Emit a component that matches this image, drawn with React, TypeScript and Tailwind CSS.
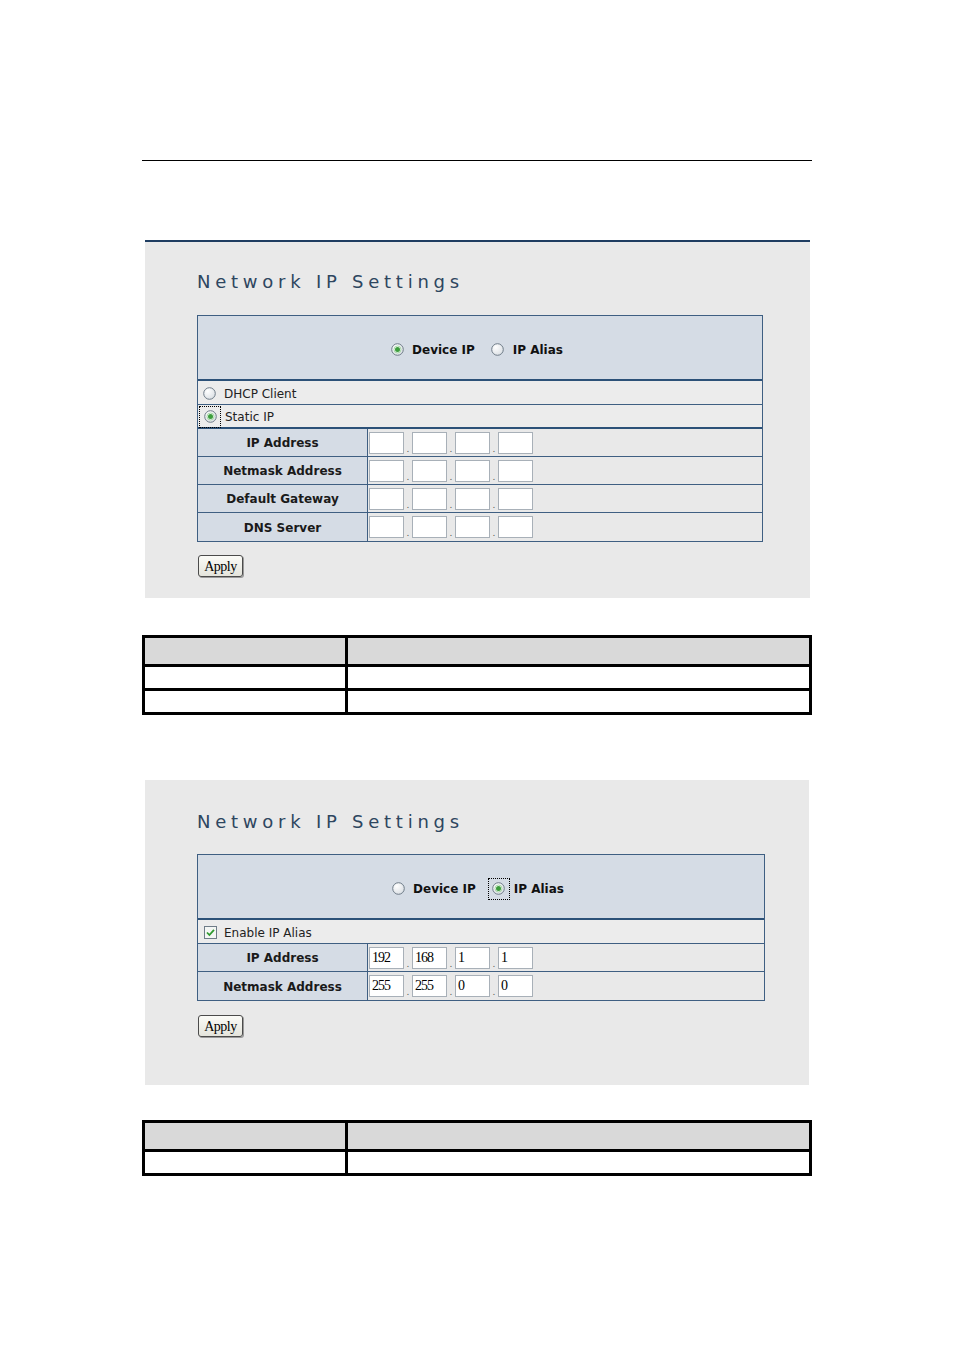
const verdana = "font-['DejaVu_Sans',Verdana,sans-serif]";

function Radio({ checked }: { checked?: boolean }) {
  return (
    <svg width="13" height="13" viewBox="0 0 13 13" className="shrink-0">
      <defs>
        <radialGradient id="rg" cx="0.35" cy="0.3" r="0.8">
          <stop offset="0" stopColor="#ffffff" />
          <stop offset="1" stopColor="#d8dde2" />
        </radialGradient>
      </defs>
      <circle cx="6.5" cy="6.5" r="5.8" fill="url(#rg)" stroke="#6f7c88" strokeWidth="1" />
      {checked && <circle cx="6.5" cy="6.5" r="2.5" fill="#3c9e3c" />}
      {checked && <circle cx="6.5" cy="6.5" r="3.5" fill="none" stroke="#a9dba9" strokeWidth="1" />}
    </svg>
  );
}

function Checkbox() {
  return (
    <svg width="13" height="13" viewBox="0 0 13 13" className="shrink-0">
      <rect x="0.5" y="0.5" width="12" height="12" fill="#f4f6f4" stroke="#6f7c88" />
      <path d="M3 6.5 L5.4 9 L10 3.8" fill="none" stroke="#2f9a2f" strokeWidth="1.8" />
    </svg>
  );
}

function Focus({ children, on }: { children: React.ReactNode; on?: boolean }) {
  return (
    <span
      className={`flex h-[22px] w-[22px] items-center justify-center border border-dotted ${on ? "border-black" : "border-transparent"}`}
    >
      {children}
    </span>
  );
}

function IpInputs({ values }: { values?: string[] }) {
  const v = values ?? ["", "", "", ""];
  return (
    <div className="flex items-center pl-[1px]">
      {v.map((val, i) => (
        <div key={i} className="flex items-end">
          <div className="flex h-[22px] w-[35px] items-center border border-[#a8b0b8] bg-white pl-[2px] font-['Liberation_Serif',serif] text-[14px] leading-none tracking-[-1px] text-black">
            {val}
          </div>
          {i < 3 && <span className="w-[8px] text-center text-[9px] leading-[10px] text-[#555]">.</span>}
        </div>
      ))}
    </div>
  );
}

function IpRow({ label, values }: { label: string; values?: string[] }) {
  return (
    <div className="flex h-[28px] border-b border-[#3f5f82] last:border-b-0">
      <div className="flex w-[170px] items-center justify-center border-r border-[#3f5f82] bg-[#d5dce5] pt-px text-[12px] font-bold text-[#1a1a1a]">
        {label}
      </div>
      <div className="flex flex-1 items-center bg-[#e9e9e9]">
        <IpInputs values={values} />
      </div>
    </div>
  );
}

function Header({ alias }: { alias?: boolean }) {
  return (
    <div className="flex h-[65px] items-center justify-center border-b-2 border-[#2c5178] bg-[#d5dce5] pr-[6px] pt-[4px] text-[12px] font-bold text-[#111]">
      <div className="flex items-center gap-[8px]">
        <Radio checked={!alias} />
        <span>Device IP</span>
      </div>
      <div className="ml-[12px] flex items-center gap-[4px]">
        <Focus on={alias}>
          <Radio checked={alias} />
        </Focus>
        <span>IP Alias</span>
      </div>
    </div>
  );
}

function ApplyButton() {
  return (
    <button className="flex h-[22px] w-[45px] items-center justify-center rounded-[3px] border border-[#4b4b4b] bg-gradient-to-b from-[#fbfbf7] to-[#e4e4dc] font-['Liberation_Serif',serif] text-[14px] tracking-[-0.5px] text-black shadow-[1px_1px_0_#9a9a9a]">
      Apply
    </button>
  );
}

function Title() {
  return (
    <h2 className="text-[18px] leading-[22px] tracking-[4.75px] text-[#2e465f]">Network IP Settings</h2>
  );
}

function DocTable({ rows }: { rows: number }) {
  return (
    <div className="ml-[142px] w-[670px] border-[3px] border-black">
      <div className="flex h-[26px] bg-[#d9d9d9]">
        <div className="w-[203px] border-r-[3px] border-black" />
        <div className="flex-1" />
      </div>
      {Array.from({ length: rows }).map((_, i) => (
        <div key={i} className="flex h-[24px] border-t-[3px] border-black bg-white">
          <div className="w-[203px] border-r-[3px] border-black" />
          <div className="flex-1" />
        </div>
      ))}
    </div>
  );
}

export default function App() {
  return (
    <div className={`${verdana} h-[1350px] w-[954px] bg-white pt-[160px]`}>
      <div className="ml-[142px] h-px w-[670px] bg-black" />

      {/* first panel: device IP */}
      <div className="ml-[145px] mt-[79px] h-[358px] w-[665px] border-t-2 border-[#1f3d61] bg-[#e9e9e9] pl-[52px] pt-[29px]">
        <Title />
        <div className="mt-[22px] w-[566px] border border-[#3f5f82] text-[12px]">
          <Header />
          <div className="flex h-[24px] items-center gap-[8px] border-b border-[#3f5f82] bg-[#ececec] pl-[5px] pt-[2px] text-[#222]">
            <Radio />
            <span>DHCP Client</span>
          </div>
          <div className="flex h-[24px] items-center gap-[4px] border-b-2 border-[#2c5178] bg-[#ececec] pl-px pt-px text-[#222]">
            <Focus on>
              <Radio checked />
            </Focus>
            <span>Static IP</span>
          </div>
          <IpRow label="IP Address" />
          <IpRow label="Netmask Address" />
          <IpRow label="Default Gateway" />
          <IpRow label="DNS Server" />
        </div>
        <div className="mt-[13px] pl-px">
          <ApplyButton />
        </div>
      </div>

      <div className="mt-[37px]">
        <DocTable rows={2} />
      </div>

      {/* second panel: IP alias */}
      <div className="ml-[145px] mt-[65px] h-[305px] w-[664px] bg-[#e9e9e9] pl-[52px] pt-[31px]">
        <Title />
        <div className="mt-[21px] w-[568px] border border-[#3f5f82] text-[12px]">
          <Header alias />
          <div className="flex h-[24px] items-center gap-[7px] border-b border-[#3f5f82] bg-[#ececec] pl-[6px] pt-[2px] text-[#222]">
            <Checkbox />
            <span>Enable IP Alias</span>
          </div>
          <IpRow label="IP Address" values={["192", "168", "1", "1"]} />
          <IpRow label="Netmask Address" values={["255", "255", "0", "0"]} />
        </div>
        <div className="mt-[14px] pl-px">
          <ApplyButton />
        </div>
      </div>

      <div className="mt-[35px]">
        <DocTable rows={1} />
      </div>
    </div>
  );
}
